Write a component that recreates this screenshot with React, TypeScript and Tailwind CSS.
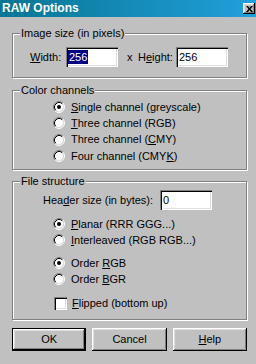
import React from "react";

const groupCls =
  "relative border border-[#808080] shadow-[inset_1px_1px_0_#ffffff,1px_1px_0_#ffffff]";
const legendCls =
  "absolute left-[7px] top-[-7px] px-[1px] bg-[#c0c0c0] leading-[13px]";
const sunken =
  "bg-white shadow-[inset_1px_1px_0_#808080,inset_2px_2px_0_#000000,inset_-1px_-1px_0_#ffffff,inset_-2px_-2px_0_#dfdfdf]";
const raised =
  "shadow-[inset_-1px_-1px_0_#000000,inset_1px_1px_0_#ffffff,inset_-2px_-2px_0_#808080,inset_2px_2px_0_#dfdfdf]";

function Radio({ checked }: { checked?: boolean }) {
  return (
    <svg width="12" height="12" viewBox="0 0 12 12" className="shrink-0">
      <circle cx="6" cy="6" r="4.5" fill="#ffffff" />
      <path d="M2.11 9.89 A5.5 5.5 0 0 1 9.89 2.11" stroke="#808080" strokeWidth="1" fill="none" />
      <path d="M9.89 2.11 A5.5 5.5 0 0 1 2.11 9.89" stroke="#ffffff" strokeWidth="1" fill="none" />
      <path d="M2.82 9.18 A4.5 4.5 0 0 1 9.18 2.82" stroke="#000000" strokeWidth="1" fill="none" />
      <path d="M9.18 2.82 A4.5 4.5 0 0 1 2.82 9.18" stroke="#dfdfdf" strokeWidth="1" fill="none" />
      {checked && <circle cx="6" cy="6" r="2" fill="#000000" />}
    </svg>
  );
}

function U({ children }: { children: React.ReactNode }) {
  return <span className="underline underline-offset-[1px]">{children}</span>;
}

function RadioRow({
  checked,
  children,
  h,
}: {
  checked?: boolean;
  children: React.ReactNode;
  h: string;
}) {
  return (
    <div className={`flex items-center pl-[40px] ${h}`}>
      <Radio checked={checked} />
      <span className="ml-[6px] whitespace-nowrap">{children}</span>
    </div>
  );
}

export default function App() {
  return (
    <div
      className="w-[256px] h-[364px] bg-[#c0c0c0] text-black text-[11px] leading-[13px] overflow-hidden"
      style={{ fontFamily: '"Liberation Sans", Arial, sans-serif' }}
    >
      {/* Title bar */}
      <div className="h-[17px] flex items-center justify-between bg-gradient-to-r from-[#087593] to-[#20a0dc]">
        <span className="ml-[2px] text-white font-bold text-[12px] leading-[15px]">RAW Options</span>
        <div
          className={`mr-[1px] w-[12px] h-[11px] bg-[#c0c0c0] flex items-center justify-center ${raised}`}
        >
          <svg width="7" height="6" viewBox="0 0 7 6">
            <path d="M0 0h2l1.5 2L5 0h2L4.5 3 7 6H5L3.5 4 2 6H0l2.5-3z" fill="#000" />
          </svg>
        </div>
      </div>

      <div className="pl-[12px] pr-[9px]">
        {/* Image size */}
        <div className={`${groupCls} mt-[16px] h-[45px]`}>
          <span className={legendCls}>Image size (in pixels)</span>
          <div className="flex items-center pl-[17px] pt-[13px]">
            <span className="w-[36px]">
              <U>W</U>idth:
            </span>
            <div className={`w-[52px] h-[20px] ${sunken} flex items-center pl-[2px]`}>
              <span className="bg-[#000080] text-white px-[1px] leading-[14px]">256</span>
            </div>
            <span className="ml-[9px] w-[11px]">x</span>
            <span className="w-[38px]">
              H<U>e</U>ight:
            </span>
            <div className={`w-[52px] h-[20px] ${sunken} flex items-center pl-[3px]`}>256</div>
          </div>
        </div>

        {/* Color channels */}
        <div className={`${groupCls} mt-[12px] h-[80px]`}>
          <span className={legendCls}>Color channels</span>
          <div className="pt-[8px]">
            <RadioRow checked h="h-[16.33px]">
              <U>S</U>ingle channel (greyscale)
            </RadioRow>
            <RadioRow h="h-[16.33px]">
              <U>T</U>hree channel (RGB)
            </RadioRow>
            <RadioRow h="h-[16.33px]">
              Three channel (<U>C</U>MY)
            </RadioRow>
            <RadioRow h="h-[16.33px]">
              Four channel (CMY<U>K</U>)
            </RadioRow>
          </div>
        </div>

        {/* File structure */}
        <div className={`${groupCls} mt-[11px] h-[139px]`}>
          <span className={legendCls}>File structure</span>
          <div className="pt-[8px] flex flex-col">
            <div className="flex items-center pl-[30px] h-[20px]">
              <span className="w-[117px] whitespace-nowrap">
                Hea<U>d</U>er size (in bytes):
              </span>
              <div className={`w-[52px] h-[20px] ${sunken} flex items-center pl-[3px]`}>0</div>
            </div>
            <div className="mt-[6px]">
              <RadioRow checked h="h-[16px]">
                <U>P</U>lanar (RRR GGG...)
              </RadioRow>
              <RadioRow h="h-[16px]">
                <U>I</U>nterleaved (RGB RGB...)
              </RadioRow>
            </div>
            <div className="mt-[7px]">
              <RadioRow checked h="h-[16px]">
                Order <U>R</U>GB
              </RadioRow>
              <RadioRow h="h-[16px]">
                Order <U>B</U>GR
              </RadioRow>
            </div>
            <div className="mt-[8px] flex items-center pl-[41px] h-[16px]">
              <div className={`w-[13px] h-[13px] shrink-0 ${sunken}`} />
              <span className="ml-[5px]">
                <U>F</U>lipped (bottom up)
              </span>
            </div>
          </div>
        </div>

        {/* Buttons */}
        <div className="mt-[8px] flex gap-[6px]">
          <div className="w-[75px] h-[23px] border border-black">
            <div className={`w-full h-full flex items-center justify-center ${raised}`}>OK</div>
          </div>
          <div className={`w-[75px] h-[23px] flex items-center justify-center ${raised}`}>Cancel</div>
          <div className={`w-[75px] h-[23px] flex items-center justify-center ${raised}`}>
            <span>
              <U>H</U>elp
            </span>
          </div>
        </div>
      </div>
    </div>
  );
}
